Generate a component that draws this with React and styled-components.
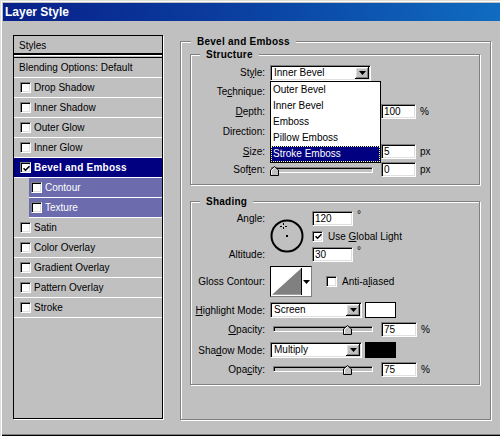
import styled, { createGlobalStyle } from "styled-components";

const GlobalStyle = createGlobalStyle`
  * { box-sizing: border-box; }
  html, body { margin: 0; padding: 0; background: #c0c0c0; }
  body {
    font-family: "Liberation Sans", Arial, sans-serif;
    font-size: 10px;
    color: #000;
  }
`;

const sunken = `
  border: 1px solid;
  border-color: #808080 #fff #fff #808080;
  box-shadow: inset 1px 1px 0 #000, inset -1px -1px 0 #dfdfdf;
`;

const raised = `
  background: #c0c0c0;
  box-shadow: inset -1px -1px 0 #000, inset 1px 1px 0 #fff,
    inset -2px -2px 0 #808080, inset 2px 2px 0 #dfdfdf;
`;

const effects = [
  { name: "Drop Shadow" },
  { name: "Inner Shadow" },
  { name: "Outer Glow" },
  { name: "Inner Glow" },
  { name: "Bevel and Emboss", checked: true, active: true },
  { name: "Contour", sub: true },
  { name: "Texture", sub: true },
  { name: "Satin" },
  { name: "Color Overlay" },
  { name: "Gradient Overlay" },
  { name: "Pattern Overlay" },
  { name: "Stroke" },
];

const styleOptions = ["Outer Bevel", "Inner Bevel", "Emboss", "Pillow Emboss", "Stroke Emboss"];

export default function App() {
  return (
    <>
      <GlobalStyle />
      <Window>
        <TitleBar>Layer Style</TitleBar>
        <Body>
          <StyleList>
            <ListHeader>Styles</ListHeader>
            <ListRule />
            <ListItem $plain>Blending Options: Default</ListItem>
            {effects.map((e) => (
              <ListItem key={e.name} $active={e.active} $sub={e.sub}>
                <CheckBox checked={e.checked} />
                {e.name}
              </ListItem>
            ))}
          </StyleList>

          <OuterGroup>
            <GroupTitle $indent={1}>Bevel and Emboss</GroupTitle>

            <SubGroup $mt={6} $pb={5}>
              <GroupTitle $indent={9}>Structure</GroupTitle>
              <Rows>
                <Row $h={17}>
                  <FieldLabel>St<u>y</u>le:</FieldLabel>
                  <Select width={101} value="Inner Bevel">
                    <Dropdown>
                      {styleOptions.map((o) => (
                        <DropItem key={o} $selected={o === "Stroke Emboss"}>
                          {o}
                        </DropItem>
                      ))}
                    </Dropdown>
                  </Select>
                </Row>
                <Row $h={21}>
                  <FieldLabel>Te<u>c</u>hnique:</FieldLabel>
                </Row>
                <Row $h={19}>
                  <FieldLabel><u>D</u>epth:</FieldLabel>
                  <Slider width={102} ml={1} value={100} max={1000} />
                  <Field $w={35} $ml={8} readOnly value="100" />
                  <Unit>%</Unit>
                </Row>
                <Row $h={21}>
                  <FieldLabel>Direction:</FieldLabel>
                </Row>
                <Row $h={18}>
                  <FieldLabel><u>S</u>ize:</FieldLabel>
                  <Slider width={102} ml={1} value={5} max={250} />
                  <Field $w={35} $ml={8} readOnly value="5" />
                  <Unit>px</Unit>
                </Row>
                <Row $h={19}>
                  <FieldLabel>Sof<u>t</u>en:</FieldLabel>
                  <Slider width={102} ml={1} value={0} max={16} />
                  <Field $w={35} $ml={8} readOnly value="0" />
                  <Unit>px</Unit>
                </Row>
              </Rows>
            </SubGroup>

            <SubGroup $mt={16} $pb={7}>
              <GroupTitle $indent={9}>Shading</GroupTitle>
              <AngleGrid>
                <GridCell $row="1" $col="1">
                  <FieldLabel>An<u>g</u>le:</FieldLabel>
                </GridCell>
                <GridCell $row="3" $col="1">
                  <FieldLabel>Altitude:</FieldLabel>
                </GridCell>
                <GridCell $row="1 / 4" $col="2">
                  <Dial width="34" height="34" viewBox="0 0 34 34">
                    <circle cx="17" cy="17" r="15.5" fill="none" stroke="#000" strokeWidth="2" />
                    <rect x="16" y="16" width="2" height="2" fill="#000" />
                    <path
                      d="M13.5 4v2M13.5 8v2M10 7.5h2M15 7.5h2"
                      stroke="#000"
                      strokeWidth="1"
                    />
                  </Dial>
                </GridCell>
                <GridCell $row="1" $col="3">
                  <Field $w={41} readOnly value="120" />
                  <Degree>°</Degree>
                </GridCell>
                <GridCell $row="2" $col="3">
                  <CheckBox checked />
                  <CheckText>
                    Use <u>G</u>lobal Light
                  </CheckText>
                </GridCell>
                <GridCell $row="3" $col="3">
                  <Field $w={41} readOnly value="30" />
                  <Degree>°</Degree>
                </GridCell>
              </AngleGrid>

              <Row $h={31} $mt={4}>
                <FieldLabel>Gloss Contour:</FieldLabel>
                <ContourPicker>
                  <svg width="30" height="27" viewBox="0 0 30 27">
                    <rect width="30" height="27" fill="#fff" />
                    <polygon points="0,27 30,0 30,27" fill="#808080" />
                  </svg>
                  <ContourArrow>
                    <DownArrow />
                  </ContourArrow>
                </ContourPicker>
                <CheckBox $ml={14} />
                <CheckText>
                  Anti-a<u>l</u>iased
                </CheckText>
              </Row>

              <Row $h={16} $mt={5}>
                <FieldLabel><u>H</u>ighlight Mode:</FieldLabel>
                <Select width={92} value="Screen" />
                <Swatch $color="#fff" />
              </Row>
              <Row $h={16} $mt={3}>
                <FieldLabel><u>O</u>pacity:</FieldLabel>
                <Slider width={100} ml={3} value={75} max={100} />
                <Field $w={36} $ml={8} readOnly value="75" />
                <Unit>%</Unit>
              </Row>
              <Row $h={16} $mt={5}>
                <FieldLabel>Sha<u>d</u>ow Mode:</FieldLabel>
                <Select width={92} value="Multiply" />
                <Swatch $color="#000" />
              </Row>
              <Row $h={16} $mt={3}>
                <FieldLabel>Opa<u>c</u>ity:</FieldLabel>
                <Slider width={100} ml={3} value={75} max={100} />
                <Field $w={36} $ml={8} readOnly value="75" />
                <Unit>%</Unit>
              </Row>
            </SubGroup>
          </OuterGroup>
        </Body>
      </Window>
    </>
  );
}

function FieldLabel({ children }) {
  return (
    <Label>
      <span>{children}</span>
    </Label>
  );
}

function CheckBox({ checked, $ml }) {
  return (
    <Box $ml={$ml}>
      {checked && (
        <svg width="7" height="7" viewBox="0 0 7 7">
          <path d="M0.5 3.2L2.5 5.2L6.5 1.2" fill="none" stroke="#000" strokeWidth="1.6" />
        </svg>
      )}
    </Box>
  );
}

function DownArrow() {
  return (
    <svg width="7" height="4" viewBox="0 0 7 4">
      <polygon points="0,0 7,0 3.5,4" fill="#000" />
    </svg>
  );
}

function Select({ width, value, children }) {
  return (
    <SelectBox $w={width}>
      <SelectText>{value}</SelectText>
      <ArrowButton>
        <DownArrow />
      </ArrowButton>
      {children}
    </SelectBox>
  );
}

function Slider({ width, ml, value, max }) {
  const left = Math.max(-2, ((width - 2) * value) / max - 4.5);
  return (
    <Track $w={width} $ml={ml}>
      <Thumb width="9" height="10" viewBox="0 0 9 10" style={{ left }}>
        <path d="M0.5 9.5V4L4.5 0.5L8.5 4V9.5Z" fill="#c0c0c0" stroke="#000" />
        <path d="M1.5 8.5V4.4L4.5 1.8" fill="none" stroke="#fff" />
      </Thumb>
    </Track>
  );
}

const Window = styled.div`
  width: 500px;
  height: 436px;
  overflow: hidden;
  padding: 3px 0 0 3px;
  background: #c0c0c0;
  box-shadow: inset 1px 1px 0 #dfdfdf, inset 2px 2px 0 #fff, inset 0 -1px 0 #000,
    inset 0 -2px 0 #808080;
`;

const TitleBar = styled.div`
  height: 18px;
  padding-left: 2px;
  line-height: 18px;
  background: linear-gradient(to right, #08208a 0%, #0a3a9c 40%, #0c52ae 70%, #106cc0 100%);
  color: #fff;
  font-size: 12px;
  font-weight: 700;
`;

const Body = styled.div`
  display: flex;
  align-items: flex-start;
  gap: 17px;
  padding: 14px 0 0 10px;
`;

const StyleList = styled.div`
  width: 150px;
  height: 384px;
  border: 1px solid #000;
  box-shadow: 1px 1px 0 #fff;
`;

const ListHeader = styled.div`
  height: 19px;
  line-height: 19px;
  padding-left: 5px;
`;

const ListRule = styled.div`
  height: 3px;
  border-top: 1px solid #fff;
  border-bottom: 1px solid #000;
  box-shadow: 0 -2px 0 #000;
`;

const ListItem = styled.div`
  display: flex;
  align-items: center;
  gap: 3px;
  height: 20px;
  margin-left: ${(p) => (p.$sub ? 15 : 0)}px;
  padding-left: ${(p) => (p.$plain ? 5 : p.$sub ? 2 : 6)}px;
  border-bottom: 1px solid #fff;
  background: ${(p) => (p.$active ? "#000080" : p.$sub ? "#6b6bad" : "transparent")};
  color: ${(p) => (p.$active || p.$sub ? "#fff" : "#000")};
  font-weight: ${(p) => (p.$active ? 700 : 400)};
  letter-spacing: ${(p) => (p.$active ? "0.25px" : "0")};
  white-space: nowrap;
`;

const Box = styled.span`
  display: inline-flex;
  align-items: center;
  justify-content: center;
  flex-shrink: 0;
  width: 11px;
  height: 11px;
  margin-left: ${(p) => p.$ml || 0}px;
  background: #fff;
  ${sunken}
  svg { margin: 1px 0 0 1px; }
`;

const Group = styled.div`
  display: flex;
  flex-direction: column;
  border: 1px solid #808080;
  box-shadow: inset 1px 1px 0 #fff, 1px 1px 0 #fff;
`;

const OuterGroup = styled(Group)`
  width: 311px;
  height: 379px;
  margin-top: 6px;
  padding: 0 10px 0 9px;
`;

const SubGroup = styled(Group)`
  width: 290px;
  margin-top: ${(p) => p.$mt}px;
  padding-bottom: ${(p) => p.$pb}px;
`;

const GroupTitle = styled.div`
  align-self: flex-start;
  margin: -6px 0 0 ${(p) => p.$indent}px;
  padding: 0 6px;
  background: #c0c0c0;
  font-weight: 700;
  line-height: 12px;
  letter-spacing: 0.25px;
`;

const Rows = styled.div`
  margin-top: 3px;
`;

const Row = styled.div`
  display: flex;
  align-items: center;
  height: ${(p) => p.$h}px;
  margin-top: ${(p) => p.$mt || 0}px;
`;

const Label = styled.span`
  display: flex;
  justify-content: flex-end;
  flex-shrink: 0;
  width: 74px;
  margin-right: 5px;
  white-space: nowrap;
`;

const SelectBox = styled.div`
  position: relative;
  display: flex;
  align-items: center;
  width: ${(p) => p.$w}px;
  height: 16px;
  padding: 0 1px 0 3px;
  background: #fff;
  ${sunken}
`;

const SelectText = styled.span`
  flex: 1;
  line-height: 12px;
`;

const ArrowButton = styled.span`
  display: flex;
  align-items: center;
  justify-content: center;
  width: 14px;
  height: 12px;
  ${raised}
`;

const Dropdown = styled.div`
  position: absolute;
  top: 15px;
  left: -1px;
  z-index: 5;
  width: 111px;
  background: #fff;
  border: 1px solid #000;
`;

const DropItem = styled.div`
  height: 16px;
  line-height: 16px;
  padding-left: 2px;
  background: ${(p) => (p.$selected ? "#000080" : "#fff")};
  color: ${(p) => (p.$selected ? "#fff" : "#000")};
  outline: ${(p) => (p.$selected ? "1px dotted #ffff80" : "none")};
  outline-offset: -1px;
`;

const Track = styled.div`
  position: relative;
  flex-shrink: 0;
  width: ${(p) => p.$w}px;
  height: 6px;
  margin-left: ${(p) => p.$ml}px;
  border: 1px solid;
  border-color: #808080 #fff #fff #808080;
  box-shadow: inset 1px 1px 0 #000;
  background: #c0c0c0;
`;

const Thumb = styled.svg`
  position: absolute;
  top: -2px;
`;

const Field = styled.input`
  flex-shrink: 0;
  width: ${(p) => p.$w}px;
  height: 15px;
  margin: 0 0 0 ${(p) => p.$ml || 0}px;
  padding: 0 0 0 2px;
  background: #fff;
  ${sunken}
  font: 10px "Liberation Sans", Arial, sans-serif;
  color: #000;
  outline: none;
`;

const Unit = styled.span`
  margin-left: 4px;
`;

const AngleGrid = styled.div`
  display: grid;
  grid-template-columns: 79px 42px auto;
  grid-template-rows: 16px 20px 16px;
  margin-top: 2px;
`;

const GridCell = styled.div`
  grid-row: ${(p) => p.$row};
  grid-column: ${(p) => p.$col};
  display: flex;
  align-items: center;
`;

const Dial = styled.svg`
  display: block;
`;

const Degree = styled.span`
  align-self: flex-start;
  margin-left: 4px;
  line-height: 10px;
`;

const CheckText = styled.span`
  margin-left: 5px;
  white-space: nowrap;
`;

const ContourPicker = styled.div`
  display: flex;
  width: 42px;
  height: 31px;
  padding: 1px;
  border: 1px solid;
  border-color: #000 #808080 #808080 #000;
  background: #fff;
`;

const ContourArrow = styled.span`
  display: flex;
  align-items: center;
  justify-content: center;
  width: 9px;
  border-left: 1px solid #000;
  background: #fff;
`;

const Swatch = styled.div`
  width: 31px;
  height: 16px;
  margin-left: 3px;
  border: 1px solid #000;
  background: ${(p) => p.$color};
`;
